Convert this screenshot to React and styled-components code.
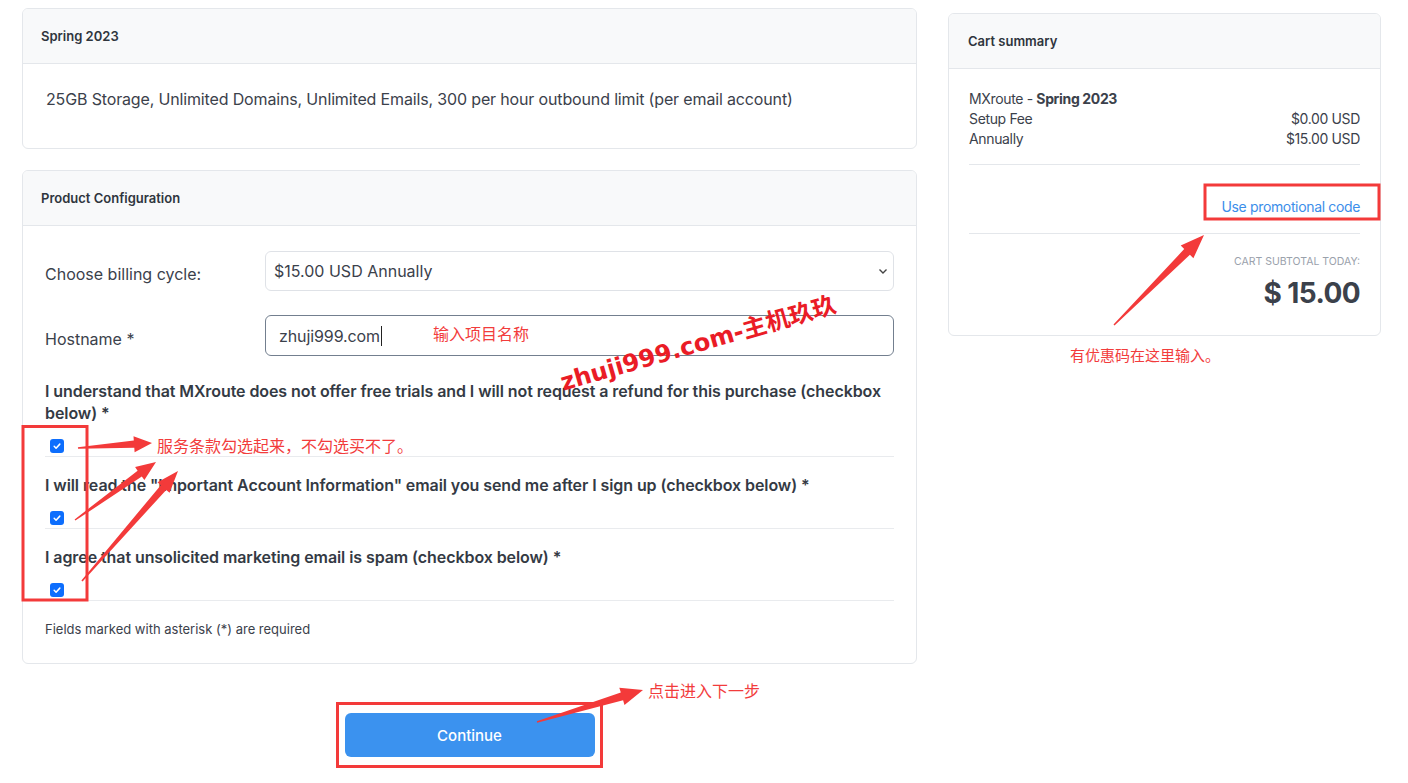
import React from 'react'
import styled, { createGlobalStyle } from 'styled-components'

const GlobalStyle = createGlobalStyle`
  * { box-sizing: border-box; }
  body {
    margin: 0;
    background: #fff;
    font-family: Inter, "Noto Sans", "Liberation Sans", sans-serif;
    color: #3b414b;
  }
`

const Page = styled.div`
  position: relative;
  width: 1408px;
  height: 783px;
  display: flex;
  gap: 31px;
  padding: 8px 0 0 22px;
  overflow: hidden;
`

const Main = styled.div`
  width: 895px;
  display: flex;
  flex-direction: column;
`

const Aside = styled.div`
  width: 433px;
  margin-top: 5px;
`

const Card = styled.div`
  border: 1px solid #e4e7eb;
  border-radius: 6px;
  background: #fff;
  margin-bottom: ${p => p.$mb || 0}px;
  overflow: hidden;
`

const CardHeader = styled.div`
  height: 55px;
  display: flex;
  align-items: center;
  padding-left: ${p => p.$pl || 18}px;
  background: #f8f9fa;
  border-bottom: 1px solid #e4e7eb;
  font-size: 13px;
  font-weight: 600;
  color: #2f353d;
`

const CardBody = styled.div`
  padding: ${p => p.$pad};
`

const Description = styled.p`
  margin: 0;
  font-size: 16px;
  line-height: 24px;
  letter-spacing: -0.15px;
`

const FormRow = styled.div`
  display: grid;
  grid-template-columns: 220px 1fr;
  align-items: center;
  margin-bottom: 24px;
`

const FieldLabel = styled.label`
  font-size: 16px;
  padding-top: 6px;
`

const SelectBox = styled.div`
  height: 40px;
  border: 1px solid #dfe2e7;
  border-radius: 6px;
  display: flex;
  align-items: center;
  justify-content: space-between;
  padding: 0 5px 0 8px;
  font-size: 16px;
`

const TextBox = styled.div`
  height: 41px;
  border: 1px solid #737f8f;
  border-radius: 6px;
  display: flex;
  align-items: center;
  padding: 0 13px;
  font-size: 16px;
  letter-spacing: -0.1px;
`

const Caret = styled.span`
  display: inline-block;
  width: 1px;
  height: 20px;
  background: #222;
  margin-left: 1px;
`

const Agreement = styled.div`
  padding: ${p => (p.$first ? 0 : 17)}px 0 3px;
  border-bottom: 1px solid #e9ebee;
`

const AgreementText = styled.div`
  font-size: 16px;
  font-weight: 600;
  line-height: 22px;
  letter-spacing: -0.08px;
  color: #343a44;
`

const CheckBox = styled.span`
  display: flex;
  align-items: center;
  justify-content: center;
  width: 14px;
  height: 14px;
  margin: 15px 0 0 5px;
  border-radius: 3px;
  background: #0d6efd;
`

const Footnote = styled.div`
  margin-top: 18px;
  font-size: 13px;
  line-height: 20px;
`

const ContinueButton = styled.button`
  align-self: center;
  margin-top: 49px;
  width: 250px;
  height: 44px;
  border: none;
  border-radius: 6px;
  background: #3b92ef;
  color: #fff;
  font-family: inherit;
  font-size: 15px;
  font-weight: 500;
`

const SummaryBody = styled.div`
  padding: 20px 20px 25px;
  letter-spacing: -0.35px;
`

const SummaryLine = styled.div`
  display: flex;
  justify-content: space-between;
  font-size: 14px;
  line-height: 20px;
`

const Divider = styled.div`
  border-top: 1px solid #e4e7eb;
  margin-top: ${p => p.$mt}px;
`

const PromoLink = styled.a`
  display: block;
  text-align: right;
  margin-top: 32px;
  font-size: 14px;
  line-height: 20px;
  color: #3b8eea;
  text-decoration: none;
`

const SubtotalLabel = styled.div`
  text-align: right;
  margin-top: 20px;
  font-size: 10.5px;
  line-height: 16px;
  letter-spacing: 0;
  text-transform: uppercase;
  color: #9aa1ab;
`

const SubtotalValue = styled.div`
  text-align: right;
  margin-top: 6px;
  font-size: 28px;
  line-height: 34px;
  font-weight: 700;
  letter-spacing: -0.6px;
  color: #3b414b;
`

/* annotation layer drawn over the screenshot */
const Overlay = styled.svg`
  position: absolute;
  left: 0;
  top: 0;
  pointer-events: none;
`

const Note = styled.span`
  position: absolute;
  left: ${p => p.$x}px;
  top: ${p => p.$y}px;
  font-family: "Noto Sans CJK SC", sans-serif;
  font-size: ${p => p.$size || 16}px;
  line-height: 20px;
  color: #f23c3c;
  white-space: nowrap;
`

const Watermark = styled.span`
  position: absolute;
  left: 561px;
  top: 368px;
  transform: rotate(-16deg);
  transform-origin: 0 50%;
  font-family: "DejaVu Sans", "Noto Sans CJK SC", sans-serif;
  font-size: 24px;
  line-height: 30px;
  font-weight: 700;
  color: #ea1c26;
  white-space: nowrap;
`

function arrow(x1, y1, x2, y2, head = 18, hw = 8, tail = 1) {
  const dx = x2 - x1
  const dy = y2 - y1
  const len = Math.hypot(dx, dy)
  const ux = dx / len
  const uy = dy / len
  const nx = -uy
  const ny = ux
  const bx = x2 - ux * head
  const by = y2 - uy * head
  const nw = hw * 0.45
  const pts = [
    [x1 + nx * tail * 0.5, y1 + ny * tail * 0.5],
    [bx + nx * nw, by + ny * nw],
    [bx + nx * hw, by + ny * hw],
    [x2, y2],
    [bx - nx * hw, by - ny * hw],
    [bx - nx * nw, by - ny * nw],
    [x1 - nx * tail * 0.5, y1 - ny * tail * 0.5],
  ]
  return pts.map(p => p.map(v => v.toFixed(1)).join(',')).join(' ')
}

const Check = () => (
  <CheckBox>
    <svg width="10" height="10" viewBox="0 0 16 16">
      <path d="M3.5 8.5l3 3 6-6.5" fill="none" stroke="#fff" strokeWidth="2.4" strokeLinecap="round" strokeLinejoin="round" />
    </svg>
  </CheckBox>
)

const agreements = [
  'I understand that MXroute does not offer free trials and I will not request a refund for this purchase (checkbox below) *',
  'I will read the "Important Account Information" email you send me after I sign up (checkbox below) *',
  'I agree that unsolicited marketing email is spam (checkbox below) *',
]

export default function App() {
  return (
    <>
      <GlobalStyle />
      <Page>
        <Main>
          <Card $mb={21}>
            <CardHeader>Spring 2023</CardHeader>
            <CardBody $pad="23px 23px 37px">
              <Description>
                25GB Storage, Unlimited Domains, Unlimited Emails, 300 per hour outbound limit (per email account)
              </Description>
            </CardBody>
          </Card>

          <Card>
            <CardHeader>Product Configuration</CardHeader>
            <CardBody $pad="25px 22px 24px 22px">
              <FormRow>
                <FieldLabel>Choose billing cycle:</FieldLabel>
                <SelectBox>
                  <span>$15.00 USD Annually</span>
                  <svg width="10" height="8" viewBox="0 0 10 8">
                    <path d="M1.5 2.5l3.5 3.5 3.5-3.5" fill="none" stroke="#444" strokeWidth="1.4" />
                  </svg>
                </SelectBox>
              </FormRow>
              <FormRow>
                <FieldLabel>Hostname *</FieldLabel>
                <TextBox>
                  zhuji999.com<Caret />
                </TextBox>
              </FormRow>

              {agreements.map((text, i) => (
                <Agreement key={i} $first={i === 0}>
                  <AgreementText>{text}</AgreementText>
                  <Check />
                </Agreement>
              ))}

              <Footnote>Fields marked with asterisk (*) are required</Footnote>
            </CardBody>
          </Card>

          <ContinueButton>Continue</ContinueButton>
        </Main>

        <Aside>
          <Card>
            <CardHeader $pl={19}>Cart summary</CardHeader>
            <SummaryBody>
              <SummaryLine>
                <span>MXroute - <b>Spring 2023</b></span>
              </SummaryLine>
              <SummaryLine>
                <span>Setup Fee</span>
                <span>$0.00 USD</span>
              </SummaryLine>
              <SummaryLine>
                <span>Annually</span>
                <span>$15.00 USD</span>
              </SummaryLine>
              <Divider $mt={15} />
              <PromoLink href="#">Use promotional code</PromoLink>
              <Divider $mt={16} />
              <SubtotalLabel>Cart subtotal today:</SubtotalLabel>
              <SubtotalValue>$ 15.00</SubtotalValue>
            </SummaryBody>
          </Card>
        </Aside>

        <Overlay width="1408" height="783" viewBox="0 0 1408 783">
          <g fill="none" stroke="#f33a3a" strokeWidth="3">
            <rect x="23" y="426.5" width="64" height="173.5" />
            <rect x="1205" y="185" width="174" height="34" />
            <rect x="337.5" y="703.5" width="264" height="63" />
          </g>
          <g fill="#f33a3a">
            <polygon points={arrow(78, 448, 152, 443, 18, 8, 1.5)} />
            <polygon points={arrow(75, 520, 156, 462, 20, 8, 1.5)} />
            <polygon points={arrow(82, 581, 178, 471, 22, 8, 1.5)} />
            <polygon points={arrow(1114, 325, 1204, 235, 24, 9, 1.5)} />
            <polygon points={arrow(537, 722, 643, 690, 22, 9, 1.5)} />
          </g>
        </Overlay>

        <Note $x={157} $y={435}>服务条款勾选起来，不勾选买不了。</Note>
        <Note $x={433} $y={323}>输入项目名称</Note>
        <Note $x={1070} $y={345} $size={15}>有优惠码在这里输入。</Note>
        <Note $x={648} $y={680}>点击进入下一步</Note>
        <Watermark>zhuji999.com-主机玖玖</Watermark>
      </Page>
    </>
  )
}
